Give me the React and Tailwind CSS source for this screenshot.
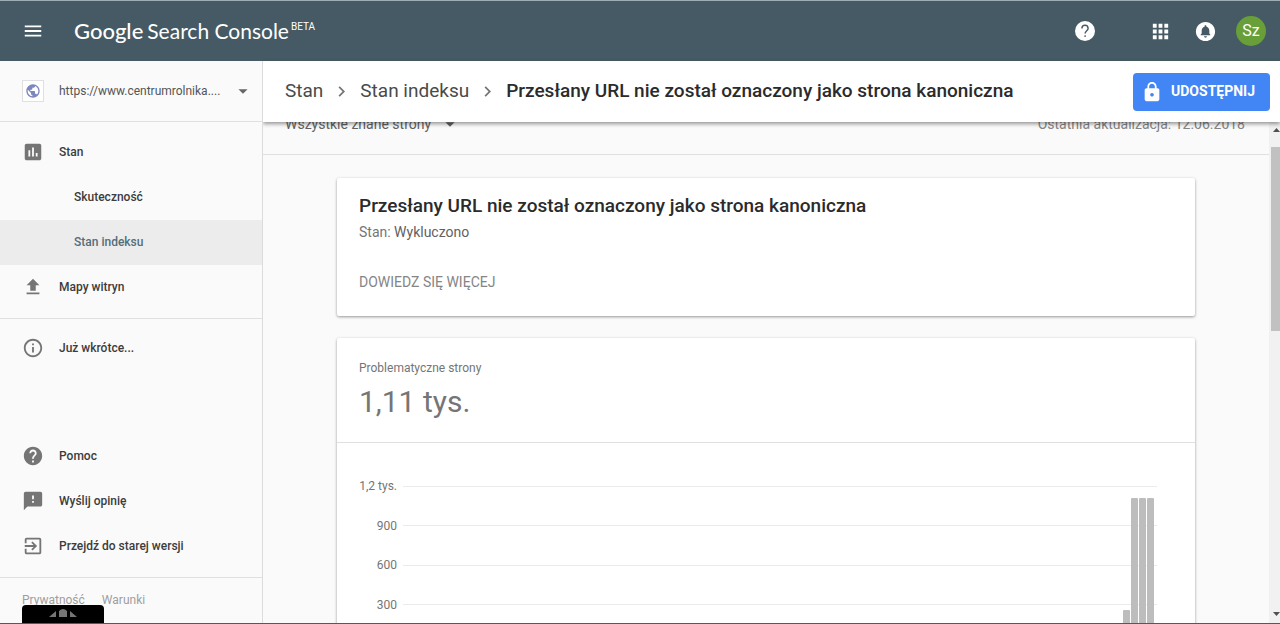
import React from 'react';
import {
  MdApps,
  MdArrowDropDown,
  MdAssessment,
  MdChevronRight,
  MdCircleNotifications,
  MdExitToApp,
  MdFeedback,
  MdHelp,
  MdInfoOutline,
  MdLock,
  MdMenu,
  MdPublic,
} from 'react-icons/md';

const CHART_MAX = 1200;

const gridLabels = ['1,2 tys.', '900', '600', '300'];

const bars = [
  { id: 'd1', value: 258 },
  { id: 'd2', value: 1110 },
  { id: 'd3', value: 1110 },
  { id: 'd4', value: 1110 },
];

const UploadIcon = ({ className }) => (
  <svg viewBox="0 0 24 24" fill="currentColor" className={className} aria-hidden="true">
    <path d="M9 16h6v-6h4l-7-7-7 7h4zM5 18h14v2H5z" />
  </svg>
);

const HelpDisc = ({ className }) => (
  <svg viewBox="0 0 20 20" className={className} aria-hidden="true">
    <circle cx="10" cy="10" r="10" fill="#fff" />
    <path
      d="M6.900 7.400a3.100 3.100 0 0 1 6.200 0c0 2.200-3 2.500-3 5.200"
      fill="none"
      stroke="#455a64"
      strokeWidth="1.4"
    />
    <circle cx="10.1" cy="15.1" r="0.9" fill="#455a64" />
  </svg>
);

const TopBar = () => (
  <header className="flex h-[61px] shrink-0 items-center border-t border-[#9fadb4] bg-[#455a64] pr-3.5 pl-[22px] text-white">
    <button type="button" aria-label="Menu">
      <MdMenu className="size-[22px]" />
    </button>
    <a href="#" className="ml-[30px] flex items-center font-['Lato',sans-serif] text-[21px] leading-6 whitespace-nowrap">
      <span className="text-[22px] font-medium">Google</span>
      <span className="ml-1">Search Console</span>
      <span className="mb-2 ml-0.5 font-['Roboto',sans-serif] text-[10px] leading-4">BETA</span>
    </a>
    <div className="ml-auto flex items-center">
      <button type="button" aria-label="Pomoc">
        <HelpDisc className="size-5" />
      </button>
      <button type="button" aria-label="Aplikacje" className="ml-[54px]">
        <MdApps className="size-[23px]" />
      </button>
      <button type="button" aria-label="Powiadomienia" className="ml-[22px]">
        <MdCircleNotifications className="size-[23px]" />
      </button>
      <button
        type="button"
        aria-label="Konto"
        className="ml-[19px] flex size-[30px] items-center justify-center rounded-full bg-[#689f38] text-base"
      >
        Sz
      </button>
    </div>
  </header>
);

const NavItem = ({ icon: Icon, label, nested, active }) => (
  <a
    href="#"
    className={`flex h-[45px] shrink-0 items-center pb-0.5 text-[12px] font-medium ${
      nested ? 'pl-[74px]' : 'pl-[22px]'
    } ${active ? 'bg-[#ececec] text-[#546e7a]' : 'text-[#3c3c3c]'}`}
  >
    {Icon && <Icon className="mr-[15px] size-[22px] text-[#757575]" />}
    {label}
  </a>
);

const Sidebar = () => (
  <aside className="relative z-20 flex w-[263px] shrink-0 flex-col border-r border-[#dcdcdc] bg-[#fafafa]">
    <button
      type="button"
      className="flex h-[61px] shrink-0 items-center border-b border-[#e0e0e0] pr-2 pl-[22px] text-left text-[12px] text-[#555]"
    >
      <span className="flex size-[22px] items-center justify-center border border-[#e0e0e0] bg-white">
        <MdPublic className="size-4 text-[#7c86bf]" />
      </span>
      <span className="ml-[15px] flex-1 whitespace-nowrap">https://www.centrumrolnika....</span>
      <MdArrowDropDown className="size-[22px] text-[#666]" />
    </button>
    <nav className="flex flex-1 flex-col pt-2">
      <NavItem icon={MdAssessment} label="Stan" />
      <NavItem label="Skuteczność" nested />
      <NavItem label="Stan indeksu" nested active />
      <NavItem icon={UploadIcon} label="Mapy witryn" />
      <div className="mt-2 mb-[7px] border-t border-[#e0e0e0]" />
      <NavItem icon={MdInfoOutline} label="Już wkrótce..." />
      <div className="flex-1" />
      <NavItem icon={MdHelp} label="Pomoc" />
      <NavItem icon={MdFeedback} label="Wyślij opinię" />
      <NavItem icon={MdExitToApp} label="Przejdź do starej wersji" />
    </nav>
    <div className="mt-2 flex h-[47px] shrink-0 items-center gap-[17px] border-t border-[#e0e0e0] pb-0.5 pl-[22px] text-[12px] text-[#9e9e9e]">
      <a href="#">Prywatność</a>
      <a href="#">Warunki</a>
    </div>
  </aside>
);

const Breadcrumbs = () => (
  <div className="relative z-10 flex h-[61px] shrink-0 items-center bg-white pr-2.5 pl-[22px] shadow-[0_2px_4px_rgba(0,0,0,0.4)]">
    <nav className="flex items-center text-[19px] whitespace-nowrap text-[#4a4a4a]">
      <a href="#">Stan</a>
      <MdChevronRight className="mx-2 size-[21px] text-[#757575]" />
      <a href="#">Stan indeksu</a>
      <MdChevronRight className="mx-2 size-[21px] text-[#757575]" />
      <span className="font-medium text-[#2b2b2b]">Przesłany URL nie został oznaczony jako strona kanoniczna</span>
    </nav>
    <button
      type="button"
      className="ml-auto flex h-[38px] items-center gap-2 rounded-sm bg-[#4285f4] pr-[15px] pl-2 text-[14px] font-bold text-white"
    >
      <MdLock className="size-[22px]" />
      UDOSTĘPNIJ
    </button>
  </div>
);

const DetailsCard = () => (
  <section className="rounded-xs bg-white px-[22px] pt-4 pb-6 shadow-[0_1px_3px_rgba(0,0,0,0.4)]">
    <h1 className="text-[19px] leading-6 font-medium text-[#2b2b2b]">
      Przesłany URL nie został oznaczony jako strona kanoniczna
    </h1>
    <p className="mt-1 text-[14px] leading-5 text-[#757575]">
      Stan: <span className="text-[#616161]">Wykluczono</span>
    </p>
    <a href="#" className="mt-[30px] block text-[14px] leading-5 text-[#858585]">
      DOWIEDZ SIĘ WIĘCEJ
    </a>
  </section>
);

const ChartCard = () => (
  <section className="rounded-xs bg-white shadow-[0_1px_3px_rgba(0,0,0,0.4)]">
    <div className="h-[105px] border-b border-[#e0e0e0] px-[22px] pt-5">
      <h2 className="text-[12px] leading-5 text-[#757575]">Problematyczne strony</h2>
      <p className="mt-1 text-[30px] leading-10 text-[#757575]">1,11 tys.</p>
    </div>
    <div className="pt-[43px] pr-[38px] pb-10 pl-[22px]">
      <div className="relative grid h-[158px] grid-rows-4">
        {gridLabels.map((label) => (
          <div key={label} className="flex h-0 items-center gap-1.5">
            <span className="w-[38px] text-right text-[12px] whitespace-nowrap text-[#757575]">{label}</span>
            <span className="flex-1 border-t border-[#ebebeb]" />
          </div>
        ))}
        <div className="absolute inset-y-0 right-[3px] flex items-end gap-px">
          {bars.map((bar) => (
            <div
              key={bar.id}
              className="w-[7px] rounded-t-[1px] bg-[#bdbdbd]"
              style={{ height: `${(bar.value / CHART_MAX) * 100}%` }}
            />
          ))}
        </div>
      </div>
    </div>
  </section>
);

const ScrollTrack = () => (
  <div className="flex w-[11px] shrink-0 flex-col items-end overflow-hidden bg-[#f1f1f1]">
    <svg viewBox="0 0 7 4" className="mt-[6px] h-1 w-[7px] shrink-0" aria-hidden="true">
      <path d="M0 4l3.500-4L7 4z" fill="#505050" />
    </svg>
    <div className="mt-[15px] h-[184px] w-[9px] bg-[#c1c1c1]" />
    <svg viewBox="0 0 7 4" className="mt-auto mb-2 h-1 w-[7px] shrink-0" aria-hidden="true">
      <path d="M0 0l3.500 4L7 0z" fill="#505050" />
    </svg>
  </div>
);

export default function App() {
  return (
    <div className="relative flex h-screen flex-col overflow-hidden bg-[#fafafa] font-['Roboto',sans-serif]">
      <TopBar />
      <div className="flex min-h-0 flex-1">
        <Sidebar />
        <main className="flex min-w-0 flex-1 flex-col">
          <Breadcrumbs />
          <div className="flex min-h-0 flex-1">
            <div className="min-w-0 flex-1">
              {/* list is scrolled, so the filter row slides under the breadcrumbs */}
              <div className="-mt-7 flex h-[61px] items-center justify-between border-b border-[#e0e0e0] pr-6 pl-[22px] text-[14px] text-[#616161]">
                <button type="button" className="flex items-center gap-2">
                  Wszystkie znane strony
                  <MdArrowDropDown className="size-[22px]" />
                </button>
                <span className="text-[#858585]">Ostatnia aktualizacja: 12.06.2018</span>
              </div>
              <div className="mx-auto mt-[23px] flex w-full max-w-[858px] flex-col gap-[22px]">
                <DetailsCard />
                <ChartCard />
              </div>
            </div>
            <ScrollTrack />
          </div>
        </main>
      </div>
      <div className="absolute bottom-0 left-[22px] z-20 flex h-[19px] w-[82px] justify-center rounded-t-sm bg-black pt-1">
        <svg viewBox="0 0 28 9" className="h-[9px] w-7" aria-hidden="true">
          <path d="M0 8L7 2v6zM10 2q4-4 8 0v6h-8zM21 2l7 6h-7z" fill="#757575" />
        </svg>
      </div>
      <div className="absolute inset-x-0 bottom-0 z-30 h-px bg-[#55556f]" />
    </div>
  );
}
